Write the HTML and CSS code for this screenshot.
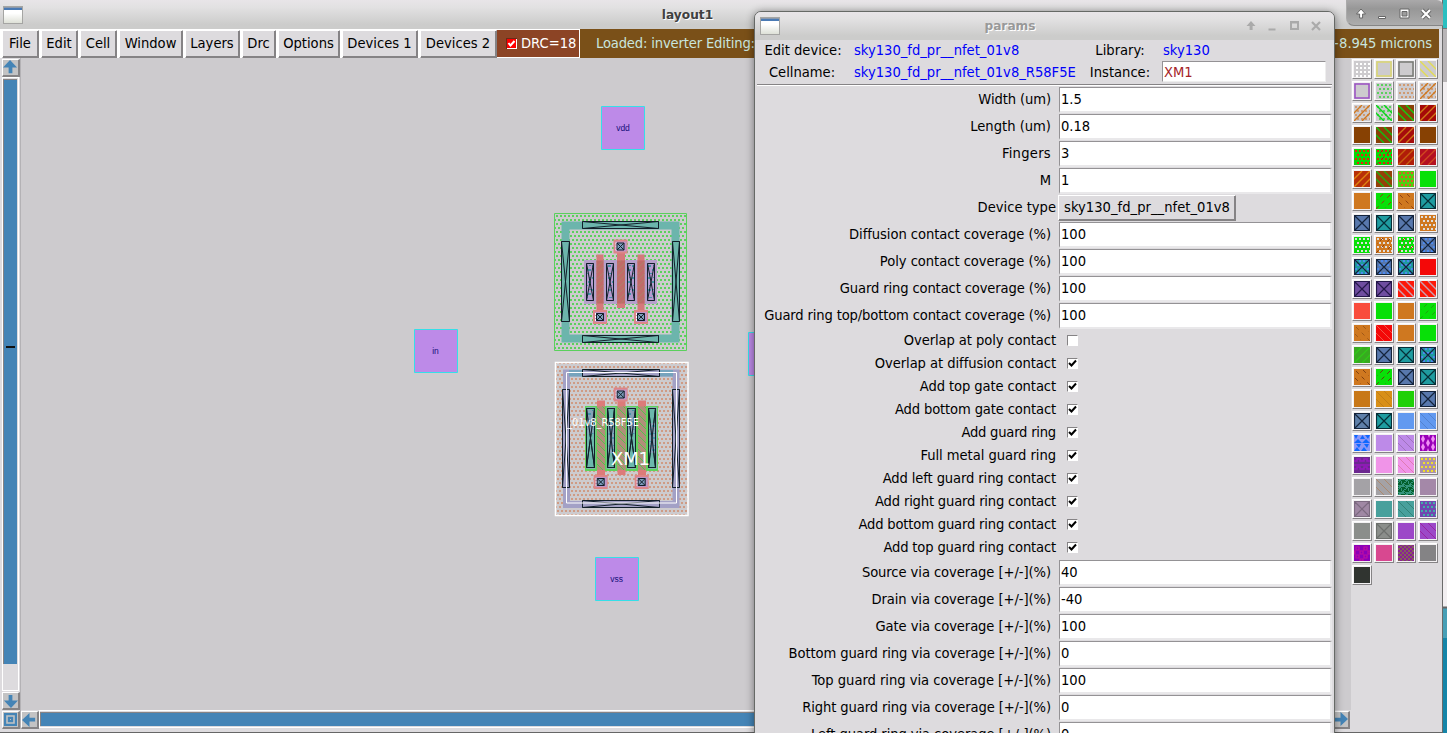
FILE: index.html
```html
<!DOCTYPE html>
<html lang="en">
<head>
<meta charset="utf-8">
<title>layout1</title>
<link rel="stylesheet" href="styles.css">
</head>
<body>
<svg width="0" height="0" class="defs">
  <defs>
    <linearGradient id="ico" x1="0" y1="0" x2="0" y2="1"><stop offset="0" stop-color="#fff"/><stop offset=".4" stop-color="#fff"/><stop offset="1" stop-color="#dcdfd5"/></linearGradient>
    <symbol id="winicon" viewBox="0 0 20 18"><rect x=".5" y=".5" width="19" height="17" fill="url(#ico)" stroke="#a5a5a3"/><rect x="1" y="1" width="18" height="3" fill="#4a7ab4"/><rect x="1" y="1" width="18" height="1" fill="#8b99ad"/></symbol>
    <symbol id="up" viewBox="0 0 16 16"><path d="M0 8L7.500 0L15 8H10V14H6V8Z" fill="#4484b6"/></symbol>
    <symbol id="controls" viewBox="0 0 78 14">
      <path d="M6 2L10.500 7H7.600V11H4.600V7H1.500Z"/><path d="M23.500 9.500h7v2h-7z"/>
      <path fill-rule="evenodd" d="M45 2h9v9h-9zM47 4.500v4.500h5v-4.500z"/><path d="M67 3l8 8M75 3l-8 8" class="edge"/><path d="M67 3l8 8M75 3l-8 8" class="cross"/>
    </symbol>
    <pattern id="green" width="4" height="8" x="556" y="215" patternUnits="userSpaceOnUse"><path d="M0 0h2v2H0zM2 4h2v2H2z" fill="#5bd05d"/></pattern>
    <pattern id="orange" width="4" height="8" x="557" y="366" patternUnits="userSpaceOnUse"><path d="M0 0h2v2H0zM2 4h2v2H2z" fill="#cf9b84"/></pattern>
    <pattern id="hatch" width="6" height="6" patternUnits="userSpaceOnUse"><path d="M0 6L6 0" stroke="#a98568" stroke-width=".8"/></pattern>
    <pattern id="ghatch" width="7" height="7" patternUnits="userSpaceOnUse"><path d="M0 0L7 7" stroke="#55c24c"/></pattern>
    <pattern id="speck" width="8" height="12" patternUnits="userSpaceOnUse"><path d="M0 1h3v2H0zM4 5h3v2H4zM1 9h3v1H1zM5 1h2v1H5z" fill="#4795a8"/></pattern>
  </defs>
</svg>
<div class="desktop">
  <main class="window">
    <header class="titlebar"><svg class="winicon" width="20" height="18"><use href="#winicon"/></svg><span class="title">layout1</span></header>
    <nav class="menubar">
      <button>File</button><button>Edit</button><button>Cell</button><button>Window</button><button>Layers</button><button>Drc</button><button>Options</button><button>Devices 1</button><button>Devices 2</button>
      <div class="drc"><svg width="11" height="11"><rect width="11" height="11" fill="#fff"/><path d="M0 0h11v1H1v10H0z" fill="#6b2a18"/><path d="M1 1h9v9H1z" fill="#f00"/><path d="M2.500 5L4.500 7.500L8.500 3" fill="none" stroke="#fff" stroke-width="2"/></svg><span>DRC=18</span></div>
      <div class="status"><span class="loaded">Loaded: inverter Editing:</span><span class="coords">+8.945 microns</span></div>
    </nav>
    <div class="work">
      <aside class="vscroll">
        <div class="arrow"><svg width="15" height="15"><use href="#up"/></svg></div>
        <div class="track"><div class="thumb"><i></i></div></div>
        <div class="arrow flip"><svg width="15" height="15"><use href="#up"/></svg></div>
        <div class="arrow"><svg width="15" height="15"><rect x="1" y="1" width="13" height="13" fill="#4484b6"/><path d="M4 4h7v7h-7z" fill="none" stroke="#c3c3c4" stroke-width="1.600"/><path d="M7 7h1v1H7z" fill="#c3c3c4"/></svg></div>
      </aside>
      <section class="center">
        <svg class="layout" viewBox="20 58 1331 652">
          <g class="pins"><path d="M601.500 106.500h43v43h-43zM414.500 329.500h43v43h-43zM595.500 557.500h43v43h-43zM748.500 332.500h43v43h-43z"/>
            <text x="623" y="131">vdd</text><text x="435.500" y="354">in</text><text x="616.500" y="582">vss</text></g>
          <path d="M554.500 213.500h132v137h-132z" fill="url(#green)" stroke="#5bd05d"/>
          <path d="M565.500 225.500h110v113h-110z" fill="none" stroke="#6cb5ac" stroke-width="8"/>
          <path d="M584 260h73v44h-73z" fill="#b6a0cb"/>
          <path d="M596.500 254.500h7V312h-7zM617 252h8v56h-8zM637.500 254.500h7V312h-7z" fill="#d5797b"/>
          <path d="M596.500 260.500h7v43h-7zM617 260.500h8v43h-8zM637.500 260.500h7v43h-7z" fill="#c06b68"/>
          <path d="M596.500 260.500h7v43h-7zM617 260.500h8v43h-8zM637.500 260.500h7v43h-7z" fill="url(#hatch)"/>
          <g id="upper"></g>
          <path d="M555.500 362.500h132.500v153h-132.500z" fill="url(#orange)" stroke="#fff" stroke-width="1.500"/>
          <path d="M566.500 373h109.500v131.500h-109.500z" fill="none" stroke="#a3a1c6" stroke-width="7"/>
          <path d="M569 370h104v6.500h-104z" fill="#76a4bd"/>
          <path d="M585 406h73v65h-73z" fill="#5fd35a"/><path d="M586.500 407h9v62h-9zM606.500 407h9v62h-9zM627 407h9v62h-9zM648 407h9v62h-9z" fill="#80b6ad"/>
          <path d="M597 400.500h8V475h-8zM617.500 399h8v76h-8zM638 400.500h8V475h-8z" fill="#dd7b79"/>
          <path d="M597 406.500h8v63.500h-8zM617.500 406.500h8v63.500h-8zM638 406.500h8v63.500h-8z" fill="#b08f79"/><path d="M597 406.500h8v63.500h-8zM617.500 406.500h8v63.500h-8zM638 406.500h8v63.500h-8z" fill="url(#ghatch)"/>
          <g id="lower"></g>
          <path d="M566.500 372.500h110v130.500h-110z" fill="none" stroke="#fff"/>
          <text class="cellid" x="567" y="426" textLength="72">_01v8_R58F5E</text>
          <text class="inst" x="611" y="465" textLength="39">XM1</text>
        </svg>
        <div class="hscroll"><div class="arrow left"><svg width="15" height="15"><use href="#up"/></svg></div><div class="track"><div class="thumb"></div></div><div class="arrow right"><svg width="15" height="15"><use href="#up"/></svg></div></div>
      </section>
      <aside class="palette" id="palette"></aside>
    </div>
  </main>
  <div class="behind"><div class="gray"></div></div>
  <div class="maincontrols"><svg width="78" height="14"><use href="#controls"/></svg></div>
  <section class="dialog">
    <header class="titlebar"><svg class="winicon" width="20" height="18"><use href="#winicon"/></svg><span class="title">params</span><svg class="controls" width="78" height="14"><use href="#controls"/></svg></header>
    <div class="info">
      <span>Edit device:</span><b>sky130_fd_pr__nfet_01v8</b><span>Library:</span><b class="lib">sky130</b>
      <span>Cellname:</span><b>sky130_fd_pr__nfet_01v8_R58F5E</b><span>Instance:</span><em>XM1</em>
    </div>
    <div class="form" id="form"></div>
  </section>
</div>
<script src="app.js"></script>
</body>
</html>
```
FILE: styles.css
```css
* { box-sizing: border-box; }
body { margin: 0; overflow: hidden; font: 14.6px/18px "DejaVu Sans Condensed", "DejaVu Sans", sans-serif; font-stretch: condensed; color: #000; }
svg { display: block; flex: none; }
.defs { position: absolute; }
.desktop { position: relative; display: flex; width: 1447px; height: 733px; overflow: hidden; background: #1585a8; }
.window { width: 1443px; height: 733px; display: flex; flex-direction: column; background: #dddbde; border-right: 1px solid #6b6b6b; border-bottom: 1px solid #666; padding: 0 3px 3px 0; }
.titlebar { display: flex; align-items: center; height: 29px; flex: none; margin-right: -3px; padding-left: 3px; background: linear-gradient(#e8e5e8, #e2e1e2 25%, #cccccb 85%); }
.title { flex: 1; text-align: center; font: bold 12.2px/18px "DejaVu Sans"; color: #404040; text-shadow: 1px 1px #fff; }
.window > .titlebar .title { padding-right: 90px; }
.menubar { height: 29px; flex: none; display: grid; grid-template-columns: 37px 37px 37px 64px 55px 34px 62px 76px 77px 81px 859px; column-gap: 2px; padding-left: 2px; background: #fff; }
button { font: inherit; color: #000; padding: 0 0 2px 0; margin-top: 1px; background: #dddbde; border: 1px solid #fff; border-color: #fff #858385 #858385 #fff; box-shadow: inset -1px -1px #858385; border-radius: 0; white-space: nowrap; text-align: center; }
.menubar button { padding-right: 1px; }
.drc { display: flex; align-items: center; margin: 1px 1px 1px -2px; padding: 0 0 1px 9px; gap: 4px; background: #8c4425; color: #fff; white-space: nowrap; }
.drc span { padding-bottom: 1px; }
.status { display: flex; justify-content: space-between; align-items: center; margin-left: -2px; padding: 0 7px 2px 16px; background: #7a5018; color: #c9e5de; width: 859px; white-space: nowrap; }
.loaded { letter-spacing: -.15px; }
.coords { letter-spacing: -.06px; }
.work { flex: 1; min-height: 0; display: flex; }
.vscroll { width: 21px; flex: none; padding: 1px 0 0 2px; display: flex; flex-direction: column; gap: 1px; border-right: 1px solid #b4b2b5; }
.arrow { width: 18px; height: 18px; flex: none; background: #c3c3c4; border: 1px solid #fff; border-right: 2px solid #858385; border-bottom: 2px solid #858385; }
.flip svg { transform: rotate(180deg); }
.left svg { transform: rotate(-90deg); }
.right svg { transform: rotate(90deg); }
.vscroll .track { height: 614px; flex: none; width: 17px; margin-top: -1px; border: 1px solid #fff; background: #dddbde; }
.vscroll .thumb { height: 585px; margin: 1px 1px 0 0; border-left: 1px solid #858385; border-top: 1px solid #858385; background: #4484b6; padding-top: 266px; }
.thumb i { display: block; width: 9px; height: 2px; margin-left: 2px; background: #111; }
.center { width: 1330px; flex: none; display: flex; flex-direction: column; background: #cdcbce; }
.layout { width: 1331px; height: 652px; margin-left: -1px; }
.hscroll { display: flex; gap: 1px; background: #dddbde; height: 19px; padding-top: 1px; }
.hscroll .track { flex: 1; margin: -1px 0 1px -1px; border: 1px solid #fff; background: #dddbde; }
.hscroll .thumb { height: 14px; margin-top: 1px; border-top: 1px solid #858385; border-left: 1px solid #858385; background: #4484b6; }
.hscroll .arrow.right { margin-right: 1px; margin-left: -1px; }
.pins path { fill: #bd8ae8; stroke: #35dfe8; }
.pins text { font: 8.5px "Liberation Sans", sans-serif; text-anchor: middle; fill: #17107c; }
.cellid { font: 9.8px "DejaVu Sans", sans-serif; fill: #fff; }
.inst { font: 18px "DejaVu Sans", sans-serif; fill: #fff; }
.palette { flex: none; width: 89px; padding: 1px 0 0 1px; display: grid; grid-template-columns: repeat(4, 20px); grid-auto-rows: 20px; gap: 2px; align-content: start; }
.swatch { background: #f3f1f3; border: 1px solid #fff; border-right-color: #858385; border-bottom-color: #858385; padding: 1px; }
.behind { width: 4px; background: linear-gradient(#2bbfc0 28px, #777 28px, #777 29px, #f2eff1 29px, #f2eff1 606px, #aaa 606px, #aaa 607px, #666 607px, #666 608px, #479fb6 609px, #479fb6 638px, #1585a8 638px); }
.gray { height: 53px; margin-top: 29px; background: #b8b5b7; }
.maincontrols { position: absolute; left: 1346px; top: 0; width: 97px; height: 26px; padding: 7px 0 0 8px; background: linear-gradient(#aaa9aa, #979797 35%, #adadad); border-bottom: 1px solid #858585; border-left: 1px solid #aaa; border-radius: 0 6px 0 8px; fill: #fff; stroke: #666; stroke-width: 1; color: #fff; }
.cross { fill: none; stroke: currentColor; stroke-width: 2.2; }
.edge { fill: none; stroke-width: 4; }
.dialog { position: absolute; left: 754px; top: 11px; width: 581px; height: 730px; background: #dddbde; border: 1px solid #666966; border-radius: 7px 7px 0 0; box-shadow: 0 1px 9px rgba(0,0,0,.45); overflow: hidden; padding-right: 2px; padding-left: 2px; }
.dialog .titlebar { height: 28px; margin: 0 -2px; padding: 0 11px 0 5px; }
.dialog .title { color: #999; padding-right: 5px; }
.dialog .controls { fill: #aaa; color: #aaa; stroke: none; }
.info { display: grid; grid-template-columns: 97px 231px 77px 168px; grid-template-rows: 20px 23px; height: 45px; border-bottom: 1px solid #858385; box-shadow: 0 1px #fff; align-items: center; white-space: nowrap; }
.info span { text-align: center; padding-right: 5px; }
.info span:nth-of-type(2), .info span:nth-of-type(3), .info span:nth-of-type(4) { padding-right: 7px; }
.info b { font-weight: normal; color: #0000fa; }
.info b.lib { padding-left: 1px; }
.info em { font-style: normal; color: #a52328; background: #fff; height: 21px; width: 164px; border: 1px solid; border-color: #949295 #eee #eee #949295; padding-left: 1px; line-height: 19px; }
.form { margin-top: 1px; }
.row { display: grid; grid-template-columns: 300px 274px; column-gap: 1px; height: 27px; align-items: center; white-space: nowrap; }
.row label { justify-self: end; padding: 0 6px 2px 0; }
.row .field { height: 26px; border: 1px solid; border-width: 1px 2px 2px 1px; border-color: #949295 #e9e8ea #e9e8ea #949295; background: #fff; padding: 2px 0 0 1px; margin-left: 1px; }
.row.check { height: 23px; }
.row.check label, .row.device label { padding-right: 1px; }
.box { width: 11px; height: 11px; margin: 0 0 1px 9px; background: #fff; border: 1px solid #858385; border-right-color: #fff; border-bottom-color: #fff; }
.row.device button { width: 178px; height: 26px; margin: 0; letter-spacing: .03px; }
```
FILE: app.js
```js
// Dialog rows: name, value (text for a field, a boolean for a check box), label tightening in px.
const rows = [
  ['Width (um)', '1.5', 1], ['Length (um)', '0.18', 0], ['Fingers', '3', -2], ['M', '1', 0],
  ['Device type', 'sky130_fd_pr__nfet_01v8', 0, 'device'],
  ['Diffusion contact coverage (%)', '100', 1.5], ['Poly contact coverage (%)', '100', 1],
  ['Guard ring contact coverage (%)', '100', 4], ['Guard ring top/bottom contact coverage (%)', '100', 6],
  ['Overlap at poly contact', false, 2], ['Overlap at diffusion contact', true, 1.5],
  ['Add top gate contact', true, 2], ['Add bottom gate contact', true, 3], ['Add guard ring', true, 3],
  ['Full metal guard ring', true, 1], ['Add left guard ring contact', true, 3],
  ['Add right guard ring contact', true, 5], ['Add bottom guard ring contact', true, 5],
  ['Add top guard ring contact', true, 4],
  ['Source via coverage [+/-](%)', '40', 2], ['Drain via coverage [+/-](%)', '-40', 2],
  ['Gate via coverage [+/-](%)', '100', 2], ['Bottom guard ring via coverage [+/-](%)', '0', 4],
  ['Top guard ring via coverage [+/-](%)', '100', 1], ['Right guard ring via coverage [+/-](%)', '0', 4],
  ['Left guard ring via coverage [+/-](%)', '0', 3]
];
const tick = '<svg width="9" height="9"><path d="M1 4L3.500 6.500L8 1.500" fill="none" stroke="#000" stroke-width="2"/></svg>';
document.getElementById('form').innerHTML = rows.map(([name, value, tight, kind]) => {
  const label = `<label style="letter-spacing:${-tight / name.length}px">${name}</label>`;
  if (typeof value === 'boolean') return `<div class="row check">${label}<div class="box">${value ? tick : ''}</div></div>`;
  if (kind) return `<div class="row device">${label}<button>${value}</button></div>`;
  return `<div class="row">${label}<div class="field">${value}</div></div>`;
}).join('');

// Fill styles of the layer palette, on a 16x16 tile.
const fills = {
  dots: c => { let d = ''; for (let r = 0; r < 4; r++) for (let x = r % 2 ? 3 : 1; x < 16; x += 4) d += `M${x} ${r * 4 + 1}h2v2h-2z`; return `<path d="${d}" fill="${c}"/>`; },
  grid: c => { let d = ''; for (let r = 0; r < 4; r++) for (let x = 2; x < 16; x += 4) d += `M${x} ${r * 4 + 2}h2v2h-2z`; return `<path d="${d}" fill="${c}"/>`; },
  back: c => `<path d="M-8 0L8 16M0 0L16 16M8 0L24 16" stroke="${c}" stroke-width="1.400"/>`,
  slash: c => `<path d="M24 0L8 16M16 0L0 16M8 0L-8 16" stroke="${c}" stroke-width="1.400"/>`,
  fback: c => `<path d="M0 8L8 16M0 0L16 16M8 0L16 8" stroke="${c}" stroke-width=".9"/>`,
  sback: c => `<path d="M2 2L16 16M9 1L15 7M1 9L7 15" stroke="${c}" stroke-dasharray="4 4"/>`,
  sslash: c => `<path d="M14 2L0 16M7 1L1 7M15 9L9 15" stroke="${c}" stroke-dasharray="4 4"/>`,
  x: c => `<path d="M.5 .5H15.500V15.500H.5ZM1 1L15 15M15 1L1 15" fill="none" stroke="${c}" stroke-width="1.200"/>`,
  frame: c => `<path d="M1 1H15V15H1Z" fill="none" stroke="${c}" stroke-width="1.500"/>`,
  tri: c => `<path d="M0 0h4l-2 4zM6 4h5l-2.500-4zM11 0h5l-2 4zM0 8l4-4 4 4zM8 8l4-4 4 4zM2 9h5l-2 4zM10 9h5l-2 4zM0 16l3-4 3 4zM7 16l3-4 3 4z" fill="${c}"/>`,
  diam: c => `<path d="M3 0l2 4-2 4-2-4zM3 8l2 4-2 4-2-4zM8 4l2 4-2 4-2-4zM8 0l2 0-1 3zM13 0l2 4-2 4-2-4zM13 8l2 4-2 4-2-4zM7 16l1-3 1 3z" fill="${c}"/>`,
  band: c => `<path d="M0 4h3v-2h3v2h4v-2h3v2h3M0 8h16M0 12h3v-2h3v2h4v-2h3v2h3" fill="none" stroke="${c}" stroke-width="1.500"/>`,
  noise: c => { let d = ''; for (let y = 0; y < 16; y++) for (let x = 0; x < 16; x++) if ((x * x * 3 + y * 5 + x * y + y * y) % 7 < 3) d += `M${x} ${y}h1v1h-1z`; return `<path d="${d}" fill="${c}"/>`; },
  rings: c => `<path d="M2 2h3v3h-3zM10 2h3v3h-3zM6 6h3v3h-3zM2 10h3v3h-3zM10 10h3v3h-3zM14 6h2v3h-2zM0 6h1v3h-1zM6 14h3v2h-3z" fill="none" stroke="${c}" stroke-width="1.200"/>`,
  weave: c => { let d = ''; for (let y = 0; y < 16; y++) for (let x = 0; x < 16; x++) if ((x + y) % 4 === 0 || (x - y + 16) % 4 === 1) d += `M${x} ${y}h1v1h-1z`; return `<path d="${d}" fill="${c}"/>`; }
};
const B = '#5878ad', T = '#1f9ca0', K = '#14243c', O = '#cf7820', G = '#08e008', W = '#dedede', N = '#cdcbce';
const bx = [B, 'x', K], tx = [T, 'x', '#062f38'], sp = '#4c8af0';
const layers = [
  [N,'grid','#fff'],[N,'frame','#dcd870'],[N,'frame','#777a74'],[N,'back','#e3dc55'],
  [N,'frame','#9a50c4'],[N,'dots','#5bd05d'],[N,'dots','#d09a70'],[N,'dots','#cf9b74','slash',O],
  [N,'dots','#cf9b74','slash',O],[N,'dots','#5bd05d','back','#08d818'],['#8a4008','back','#10d010'],['#a50808','slash','#d07818'],
  ['#874103'],['#8a4008','back','#10c010'],['#a50c0c','slash','#d07818'],['#874103'],
  ['#08d808','dots','#f02010'],['#08d808','dots','#e02010','sslash','#804010'],['#b01c08','slash','#c86010'],['#b41020','slash','#cf4820'],
  ['#b83008','slash','#de8410'],['#964008','back','#20ad10'],['#4cd010','dots','#e05828'],[G],
  [O],[G,'sslash','#904010'],[O,'sback','#904010'],tx,
  bx,tx,bx,[O,'dots',W],
  [G,'dots',W],[O,'dots',W,'sslash','#904010'],[G,'dots',W,'sslash','#c03010'],[B,'dots',sp,'x',K],
  [T,'dots',sp,'x',K],[B,'dots',sp,'x',K],[T,'dots',sp,'x',K],['#f40808'],
  ['#6f4da0','x','#24184a'],['#6f4da0','x','#24184a'],['#fc1808','back','#c8a0b0'],['#fc1808','back','#c8a0b0'],
  ['#f94c3c'],[G],[O],[G,'sslash','#20a010'],
  [O,'sback','#a05818'],['#f40808','fback','#f06050'],[O],[G],
  ['#38aa20','slash','#30c818'],bx,tx,[T,'dots',sp,'x',K],
  [O,'sback','#804010'],[G,'sslash','#604010'],bx,tx,
  ['#c87818'],['#d88f18','fback','#bd7c18'],['#20d008'],bx,
  ['#5f80aa','x',K],tx,['#6299f0'],['#6299f0','fback','#5080cc'],
  ['#8c98f8','tri','#1068ff'],['#bd8ae8'],['#bd8ae8','fback','#9c70b8'],['#9800b8','diam','#f090f4'],
  ['#6c2890','band','#9818c0'],['#f094e8'],['#f094e8','fback','#dc78ac'],['#aa90aa','dots','#f0e028'],
  ['#a4a2a6'],['#a4a2a6','fback','#ad8668'],['#35947c','noise','#04602c'],['#a488a8'],
  ['#a088a4','x','#7c6a80'],['#48a09c'],['#48a09c','fback','#308074'],['#7048b0','dots','#40b0a8'],
  ['#8b8e8b'],['#8b8e8b','x','#6d706d'],['#9c48c8'],['#9c48c8','fback','#98209c'],
  ['#8c00b8','rings','#c010a0'],['#d84890'],['#8a2094','weave','#85605c'],['#848385'],
  ['#303430']
];
document.getElementById('palette').innerHTML = layers.map(([bg, a, ca, b, cb]) =>
  `<div class="swatch"><svg width="16" height="16"><rect width="16" height="16" fill="${bg}"/>${a ? fills[a](ca) : ''}${b ? fills[b](cb) : ''}</svg></div>`).join('');

// Contact cuts: outlined rectangle with both diagonals.
const cut = (x, y, w, h, fill = 'none', extra = '') =>
  `<rect x="${x}" y="${y}" width="${w}" height="${h}" fill="${fill}"/>${extra && `<rect x="${x}" y="${y}" width="${w}" height="${h}" fill="${extra}"/>`}<path d="M${x} ${y}h${w}v${h}h${-w}zl${w} ${h}m0 ${-h}l${-w} ${h}" fill="none" stroke="#12202a" stroke-width="1"/>`;
const pad = (x, y) => `<rect x="${x - 7}" y="${y - 7}" width="14" height="14" fill="#dd8688"/><rect x="${x - 5}" y="${y - 5}" width="11" height="10" fill="#bd94c8"/><path d="M${x - 4.500} ${y - 4}v8" stroke="#fff" stroke-dasharray="2 1"/>` + cut(x - 3.500, y - 3.500, 7, 7, '#7d9cbc');
document.getElementById('upper').innerHTML =
  cut(582.5, 221.5, 76, 7) + cut(582.5, 335.5, 76, 7) + cut(561.5, 241.5, 8, 80) + cut(672.5, 241.5, 7, 80) +
  [586.5, 606.5, 627.5, 647.5].map(x => cut(x, 263.5, 7, 37, '#b59bd0', 'url(#speck)')).join('') +
  pad(620.5, 246.5) + pad(600, 317) + pad(641, 317);
document.getElementById('lower').innerHTML =
  cut(582.5, 369.5, 77, 7, '#a3a1c6') + cut(582.5, 500.5, 77, 7) + cut(562.5, 389.5, 7, 98) + cut(672.5, 389.5, 7, 98) +
  [586.5, 607.5, 627.5, 648.5].map((x, i) => cut(x, 408.5, i % 2 ? 7 : 8, 59, '#6cb8ac') + `<rect x="${x + 1}" y="${i % 2 ? 423 : 410}" width="6" height="${i % 2 ? 30 : 24}" fill="#9299be" opacity=".7"/><rect x="${x + 1}" y="${i % 2 ? 423 : 410}" width="6" height="${i % 2 ? 30 : 24}" fill="url(#speck)"/>` + cut(x, 408.5, i % 2 ? 7 : 8, 59)).join('') +
  pad(620.7, 394.5) + pad(600.7, 482) + pad(641.7, 482);
```
